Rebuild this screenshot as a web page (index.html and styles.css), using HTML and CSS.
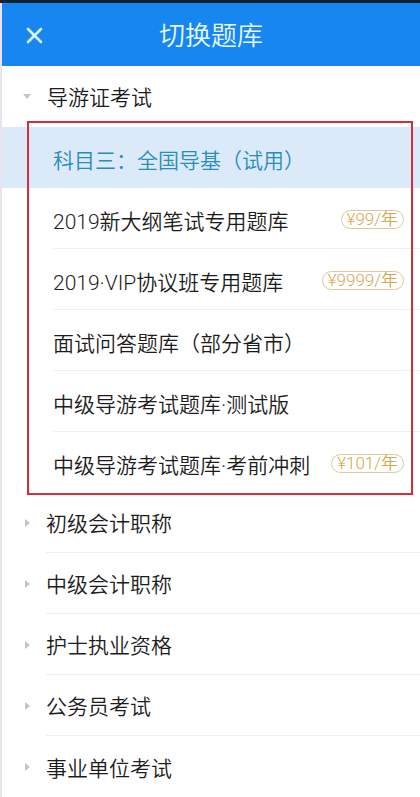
FILE: index.html
```html
<!DOCTYPE html>
<html lang="zh-CN">
<head>
    <meta charset="UTF-8">
    <meta name="viewport" content="width=device-width, initial-scale=1.0">
    <title>切换题库</title>
    <link rel="stylesheet" href="styles.css">
</head>
<body>
    <div class="statusbar"></div>
    <div class="page">
        <div class="header">
            <span class="close">
                <svg width="17" height="17" viewBox="0 0 17 17">
                    <path d="M2 2 L15 15 M15 2 L2 15" stroke="#d9f6ff" stroke-width="2.6" stroke-linecap="round"/>
                </svg>
            </span>
            <h1>切换题库</h1>
        </div>

        <ul class="list">
            <li class="group open">
                <div class="group-head"><i class="arrow"></i><span class="group-name">导游证考试</span></div>
                <ul class="sub-list">
                    <li class="sub-item active"><div class="sub-inner"><span>科目三：全国导基（试用）</span></div></li>
                    <li class="sub-item"><div class="sub-inner"><span>2019新大纲笔试专用题库</span><span class="price">¥99/年</span></div></li>
                    <li class="sub-item"><div class="sub-inner"><span>2019·VIP协议班专用题库</span><span class="price">¥9999/年</span></div></li>
                    <li class="sub-item"><div class="sub-inner"><span>面试问答题库（部分省市）</span></div></li>
                    <li class="sub-item"><div class="sub-inner"><span>中级导游考试题库·测试版</span></div></li>
                    <li class="sub-item"><div class="sub-inner"><span>中级导游考试题库·考前冲刺</span><span class="price">¥101/年</span></div></li>
                </ul>
            </li>
            <li class="group">
                <div class="group-head"><i class="arrow"></i><span class="group-name">初级会计职称</span></div>
            </li>
            <li class="group">
                <div class="group-head"><i class="arrow"></i><span class="group-name">中级会计职称</span></div>
            </li>
            <li class="group">
                <div class="group-head"><i class="arrow"></i><span class="group-name">护士执业资格</span></div>
            </li>
            <li class="group">
                <div class="group-head"><i class="arrow"></i><span class="group-name">公务员考试</span></div>
            </li>
            <li class="group">
                <div class="group-head"><i class="arrow"></i><span class="group-name">事业单位考试</span></div>
            </li>
        </ul>
    </div>
</body>
</html>
```

FILE: styles.css
```css
body {
    margin: 0;
    background-color: #fff;
    font-family: Roboto, "Noto Sans CJK SC", sans-serif;
    font-weight: 350;
    color: #1c1c1c;
}
ul {
    list-style: none;
    margin: 0;
    padding: 0;
}
.statusbar {
    height: 3px;
    background-color: #0f2232;
}
.page {
    border-left: 2px solid #e9e5ee;
    min-height: 794px;
    overflow: hidden;
}
.header {
    height: 63px;
    background-color: #1886f1;
    display: flex;
    align-items: center;
    position: relative;
}
.close {
    display: flex;
    margin-left: 24px;
    margin-top: 2px;
}
.header h1 {
    position: absolute;
    left: 0;
    right: 0;
    top: 0;
    margin: 0;
    line-height: 66px;
    text-align: center;
    font-size: 26px;
    font-weight: 350;
    color: #e6f8ff;
    pointer-events: none;
}
.group-head {
    height: 61px;
    display: flex;
    align-items: center;
    position: relative;
}
.group-head .group-name {
    flex: 1;
    margin-left: 16px;
    height: 60px;
    line-height: 64px;
    font-size: 21px;
    border-bottom: 1px solid #ececec;
}
.group.open .group-name {
    border-bottom-color: transparent;
}
.group:last-child .group-name {
    border-bottom: none;
}
.arrow {
    display: block;
    width: 0;
    height: 0;
    margin-left: 23px;
    border-top: 4px solid transparent;
    border-bottom: 4px solid transparent;
    border-left: 5px solid #c4c4c4;
}
.group.open .arrow {
    margin-left: 21px;
    margin-right: 0;
    border-left: 4px solid transparent;
    border-right: 4px solid transparent;
    border-top: 5px solid #c4c4c4;
    border-bottom: none;
}
.sub-list {
    position: relative;
}
.sub-list::after {
    content: "";
    position: absolute;
    top: -6px;
    bottom: -3px;
    left: 25px;
    right: 7px;
    border: 2px solid #d32e3b;
    pointer-events: none;
}
.sub-item.active {
    background-color: #dbeaf9;
}
.sub-item.active .sub-inner {
    color: #2a8db4;
    border-bottom-color: transparent;
}
.sub-inner {
    margin-left: 51px;
    padding-right: 16px;
    padding-top: 3px;
    height: 57px;
    display: flex;
    align-items: center;
    justify-content: space-between;
    font-size: 21px;
    border-bottom: 1px solid #efefef;
}
.sub-item:last-child .sub-inner {
    border-bottom: none;
}
.price {
    font-size: 17px;
    line-height: 17px;
    padding: 0 5px;
    border: 1px solid #dfc89a;
    border-radius: 10px;
    color: #d8a552;
}
```
